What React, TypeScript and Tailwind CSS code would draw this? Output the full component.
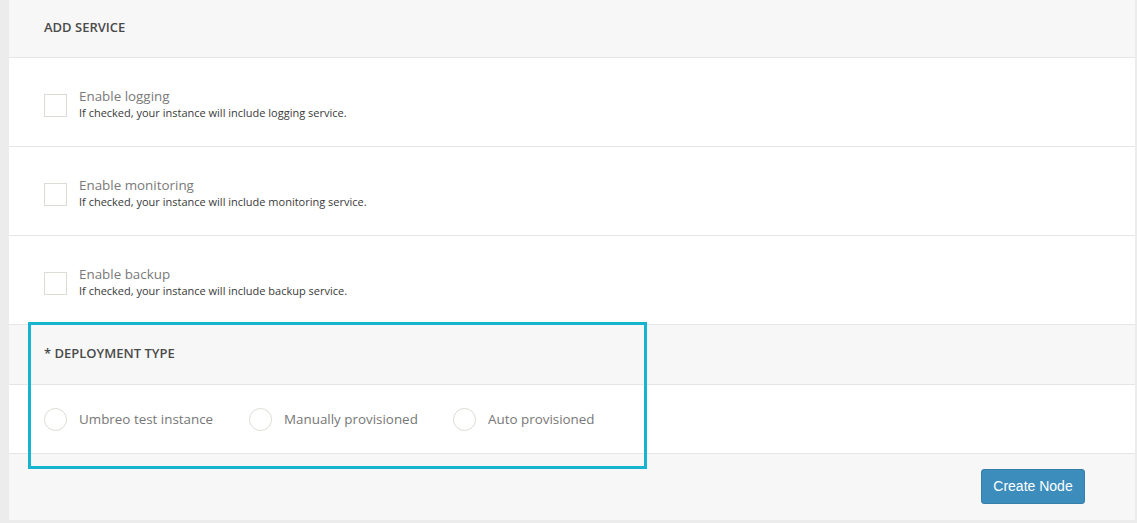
import React from "react";

type ServiceOption = {
  title: string;
  description: string;
};

const services: ServiceOption[] = [
  {
    title: "Enable logging",
    description: "If checked, your instance will include logging service.",
  },
  {
    title: "Enable monitoring",
    description: "If checked, your instance will include monitoring service.",
  },
  {
    title: "Enable backup",
    description: "If checked, your instance will include backup service.",
  },
];

const deploymentTypes = [
  { label: "Umbreo test instance", width: "w-[205px]" },
  { label: "Manually provisioned", width: "w-[204px]" },
  { label: "Auto provisioned", width: "w-auto" },
];

function SectionHeader({ title, height }: { title: string; height: string }) {
  return (
    <div
      className={`flex items-center border-b border-[#e6e6e6] bg-[#f7f7f7] px-[35px] pb-[1px] ${height}`}
    >
      <h3 className="text-[13px] font-semibold uppercase text-[#4a4a4a]">
        {title}
      </h3>
    </div>
  );
}

function ServiceRow({ service }: { service: ServiceOption }) {
  return (
    <div className="flex h-[89px] items-center border-b border-[#e6e6e6] bg-white px-[35px] pt-[3px]">
      <span className="mt-[4px] h-[23px] w-[23px] shrink-0 border border-[#dedbd6] bg-white" />
      <div className="ml-[12px] flex flex-col">
        <span className="text-[13.4px] leading-[17px] text-[#7a7a7a]">
          {service.title}
        </span>
        <span className="text-[11px] leading-[15px] text-[#3a3a3a]">
          {service.description}
        </span>
      </div>
    </div>
  );
}

export default function App() {
  return (
    <div
      className="h-[523px] w-full bg-[#ececec] pl-[9px] pr-[2px]"
      style={{ fontFamily: '"Open Sans", "Noto Sans", sans-serif' }}
    >
      <div className="relative flex h-[520px] flex-col bg-white">
        <SectionHeader title="Add Service" height="h-[58px]" />

        {services.map((service) => (
          <ServiceRow key={service.title} service={service} />
        ))}

        <SectionHeader title="* Deployment Type" height="h-[60px]" />

        <div className="flex h-[69px] items-center border-b border-[#e6e6e6] bg-white px-[35px]">
          {deploymentTypes.map((type) => (
            <label
              key={type.label}
              className={`flex items-center ${type.width}`}
            >
              <span className="h-[23px] w-[23px] shrink-0 rounded-full border border-[#dedbd6] bg-white" />
              <span className="ml-[12px] text-[13.4px] font-medium text-[#777777]">
                {type.label}
              </span>
            </label>
          ))}
        </div>

        <div className="flex flex-1 items-start justify-end bg-[#f7f7f7] pr-[50px] pt-[15px]">
          <button
            className="h-[35px] w-[104px] rounded-[3px] border border-[#367fa9] bg-[#3c8dbc] text-[14px] text-white"
            style={{ fontFamily: '"Liberation Sans", Arial, sans-serif' }}
          >
            Create Node
          </button>
        </div>

        <div className="pointer-events-none absolute left-[19px] top-[322px] h-[147px] w-[619px] border-[3px] border-[#17b4cf]" />
      </div>
    </div>
  );
}
